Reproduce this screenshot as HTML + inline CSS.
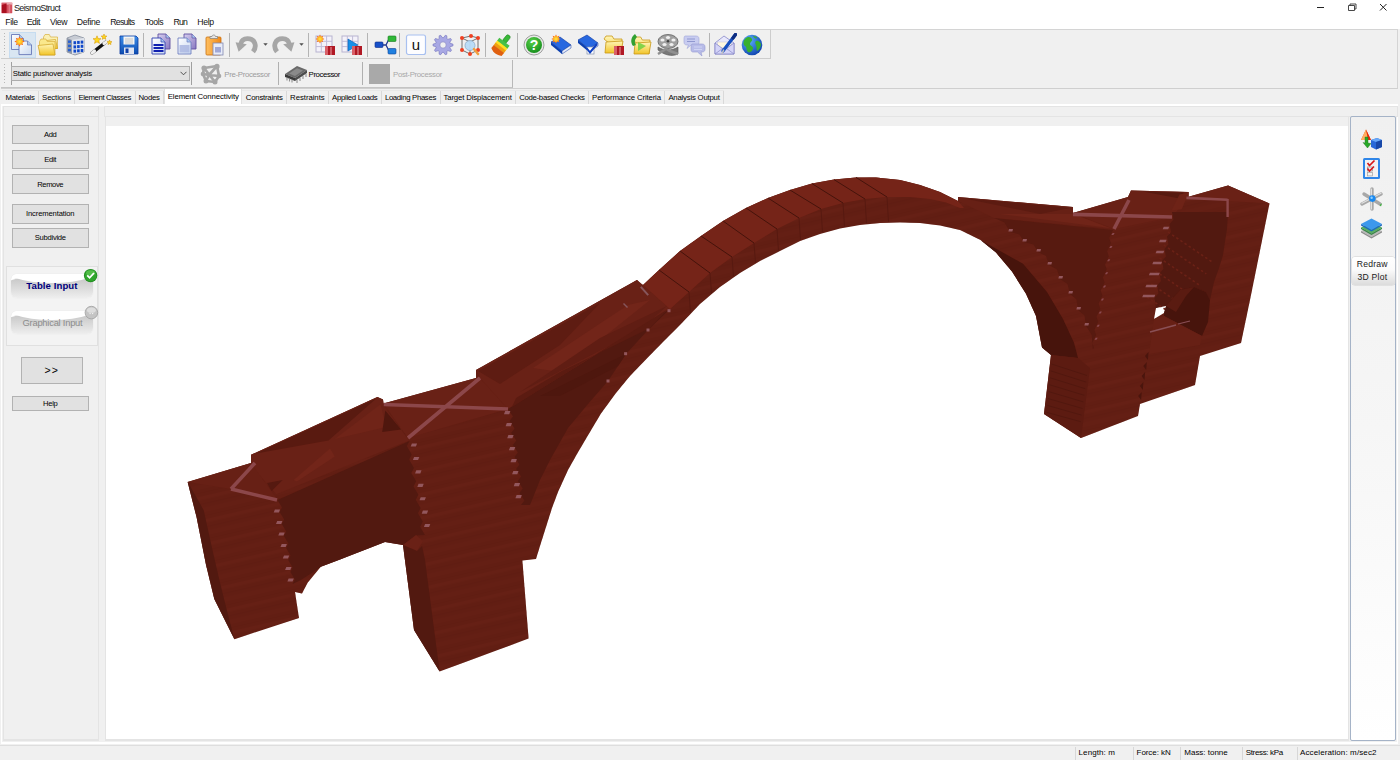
<!DOCTYPE html>
<html>
<head>
<meta charset="utf-8">
<title>SeismoStruct</title>
<style>
*{box-sizing:border-box;margin:0;padding:0}
html,body{width:1400px;height:760px;overflow:hidden;background:#f0f0f0;font-family:"Liberation Sans",sans-serif;font-size:11px;color:#000}
.abs{position:absolute}
#titlebar{left:0;top:0;width:1400px;height:15px;background:#fff}
#menubar{left:0;top:15px;width:1400px;height:14px;background:#fff}
#tb1{left:1px;top:29px;width:770px;height:30px;background:#f0f0f0;border-top:1px solid #d4d4d4;border-bottom:1px solid #cdcdcd;border-right:1px solid #cdcdcd}
#tb2{left:1px;top:60px;width:512px;height:28px;background:#f0f0f0;border-bottom:1px solid #c4c4c4;border-right:1px solid #b8b8b8}
#tb1rest{left:1px;top:29px;width:1397px;height:60px;background:#f0f0f0;border-top:1px solid #d4d4d4;border-bottom:1px solid #cfcfcf;border-right:1px solid #d4d4d4}
#whiteline{left:1px;top:104px;width:1397px;height:2px;background:#fff}
.box{border:1px solid #e4e4e4;background:#f0f0f0}
#canvas{left:106px;top:126px;width:1242px;height:613px;background:#fff}
#status{left:0;top:745px;width:1400px;height:15px;background:#f0f0f0;border-top:1px solid #dedede}
</style>
</head>
<body>
<!-- title bar -->
<div id="titlebar" class="abs"></div>
<svg class="abs" style="left:1px;top:2px" width="12" height="12" viewBox="0 0 12 12"><rect x="0.3" y="0.3" width="11.2" height="11.2" rx="1" fill="#e9a0a8"/><rect x="0.8" y="1.2" width="10.2" height="9.8" fill="#d4505e"/><path d="M0.8 3L5.6 1.4V11H0.8Z" fill="#aa1020"/><path d="M5.6 1.4H11V2.4H5.6Z" fill="#f6dadd"/><rect x="7.6" y="2.4" width="1.6" height="8.6" fill="#e27884"/></svg>
<svg class="abs" style="left:1310px;top:0" width="90" height="15" viewBox="0 0 90 15">
<path d="M7 7.5H14" stroke="#222" stroke-width="1" fill="none"/>
<path d="M38.5 5.5H44.5V10.5H38.5Z M40 5.5V4H46V9H44.5" stroke="#333" stroke-width="0.9" fill="none"/>
<path d="M70 4L76.5 10.5M76.5 4L70 10.5" stroke="#222" stroke-width="1" fill="none"/>
</svg>
<!-- menu bar -->
<div id="menubar" class="abs"></div>
<div class="abs" style="left:13.9px;top:3.1px;font-size:9.00px;line-height:11px;letter-spacing:-0.601px;color:#1a1a1a;white-space:nowrap;">SeismoStruct</div>
<div class="abs" style="left:5.2px;top:17.4px;font-size:8.70px;line-height:10px;letter-spacing:-0.354px;color:#111;white-space:nowrap;">File</div>
<div class="abs" style="left:26.7px;top:17.4px;font-size:8.70px;line-height:10px;letter-spacing:-0.398px;color:#111;white-space:nowrap;">Edit</div>
<div class="abs" style="left:50.1px;top:17.4px;font-size:8.70px;line-height:10px;letter-spacing:-0.425px;color:#111;white-space:nowrap;">View</div>
<div class="abs" style="left:76.8px;top:17.4px;font-size:8.70px;line-height:10px;letter-spacing:-0.291px;color:#111;white-space:nowrap;">Define</div>
<div class="abs" style="left:110.2px;top:17.4px;font-size:8.70px;line-height:10px;letter-spacing:-0.687px;color:#111;white-space:nowrap;">Results</div>
<div class="abs" style="left:144.8px;top:17.4px;font-size:8.70px;line-height:10px;letter-spacing:-0.342px;color:#111;white-space:nowrap;">Tools</div>
<div class="abs" style="left:173.5px;top:17.4px;font-size:8.70px;line-height:10px;letter-spacing:-0.753px;color:#111;white-space:nowrap;">Run</div>
<div class="abs" style="left:197.2px;top:17.4px;font-size:8.70px;line-height:10px;letter-spacing:-0.323px;color:#111;white-space:nowrap;">Help</div>
<!-- toolbars -->
<div id="tb1rest" class="abs"></div>
<div id="tb1" class="abs"></div>
<div id="tb2" class="abs"></div>
<svg width="0" height="0" style="position:absolute"><defs>
<linearGradient id="gFold" x1="0" y1="0" x2="0" y2="1"><stop offset="0" stop-color="#fff6b8"/><stop offset="1" stop-color="#f2c428"/></linearGradient>
<linearGradient id="gDoc" x1="0" y1="0" x2="1" y2="1"><stop offset="0" stop-color="#ffffff"/><stop offset="1" stop-color="#c8d8f0"/></linearGradient>
<linearGradient id="gPur" x1="0" y1="0" x2="1" y2="1"><stop offset="0" stop-color="#d8d0f0"/><stop offset="1" stop-color="#8878c0"/></linearGradient>
<linearGradient id="gBlue" x1="0" y1="0" x2="0" y2="1"><stop offset="0" stop-color="#3c8ce8"/><stop offset="1" stop-color="#0c4cb0"/></linearGradient>
<radialGradient id="gGlobe" cx="0.35" cy="0.3" r="0.8"><stop offset="0" stop-color="#5cb0ff"/><stop offset="1" stop-color="#0a3ca8"/></radialGradient>
<radialGradient id="gGreen" cx="0.4" cy="0.3" r="0.8"><stop offset="0" stop-color="#58d048"/><stop offset="1" stop-color="#108818"/></radialGradient>
<radialGradient id="gSun" cx="0.5" cy="0.5" r="0.5"><stop offset="0" stop-color="#ffe840"/><stop offset="0.55" stop-color="#ffb020"/><stop offset="1" stop-color="#f03010"/></radialGradient>
<linearGradient id="gOr" x1="0" y1="0" x2="1" y2="0"><stop offset="0" stop-color="#ffc060"/><stop offset="1" stop-color="#f08818"/></linearGradient>
<linearGradient id="gGrey" x1="0" y1="0" x2="0" y2="1"><stop offset="0" stop-color="#d8d8d8"/><stop offset="1" stop-color="#707070"/></linearGradient>
</defs></svg>
<div class="abs" style="left:4px;top:33px;width:1px;height:23px;background:repeating-linear-gradient(to bottom,#b8b8b8 0 1px,transparent 1px 3px)"></div>
<div class="abs" style="left:4px;top:64px;width:1px;height:21px;background:repeating-linear-gradient(to bottom,#b8b8b8 0 1px,transparent 1px 3px)"></div>
<div class="abs" style="left:9px;top:32px;width:27px;height:26px;background:#d9e6f2;border:1px solid #c6dcf0"></div>
<svg class="abs" style="left:10.0px;top:32.8px" width="24" height="24" viewBox="0 0 24 24"><path d="M1.5 1.5H9.5L13.5 5.5V16.5H1.5Z" fill="url(#gDoc)" stroke="#6878b8" stroke-width="0.9"/><path d="M9.5 1.5V5.5H13.5" fill="#a8c8f0" stroke="#6878b8" stroke-width="0.7"/><path d="M9 8H17.5L21.5 12V21.6H9Z" fill="url(#gDoc)" stroke="#6878b8" stroke-width="0.9"/><path d="M17.5 8V12H21.5" fill="#a8c8f0" stroke="#6878b8" stroke-width="0.7"/><polygon points="14.5,8.5 12.4,9.7 13.0,12.0 10.7,11.4 9.5,13.5 8.3,11.4 6.0,12.0 6.6,9.7 4.5,8.5 6.6,7.3 6.0,5.0 8.3,5.6 9.5,3.5 10.7,5.6 13.0,5.0 12.4,7.3" fill="url(#gSun)"/></svg>
<svg class="abs" style="left:36.6px;top:32.8px" width="24" height="24" viewBox="0 0 24 24"><path d="M6.5 4L8 1.5L12.3 1.5L13.5 4L20.5 4L20.5 15.5L6.5 15.5Z" fill="#fbf0b4" stroke="#d8b040" stroke-width="0.7"/><path d="M5 8L18.5 6.5L20.5 15.5L7.2 15.5Z" fill="url(#gFold)" stroke="#cfa020" stroke-width="0.7"/><path d="M2.5 8.5L4 6L8.93 6L10.25 8.5L18 8.5L18 22L2.5 22Z" fill="#fae88c" stroke="#d8b040" stroke-width="0.7"/><path d="M1 12.5L16 11L18 22L3.2 22Z" fill="url(#gFold)" stroke="#cfa020" stroke-width="0.7"/></svg>
<svg class="abs" style="left:63.0px;top:32.8px" width="24" height="24" viewBox="0 0 24 24"><path d="M4 5L12 2L21 5V19L12 22L4 19Z" fill="#c8ccd4" stroke="#8890a0" stroke-width="0.8"/><path d="M4 5L9 7V21L4 19Z" fill="#9098a8"/><path d="M9 7L21 5V19L9 21Z" fill="#e0e4ec"/><rect x="10.5" y="8.2" width="2.6" height="3" fill="#1048c8"/><rect x="10.5" y="12.4" width="2.6" height="3" fill="#1048c8"/><rect x="10.5" y="16.6" width="2.6" height="3" fill="#1048c8"/><rect x="14.1" y="7.9" width="2.6" height="3" fill="#1048c8"/><rect x="14.1" y="12.1" width="2.6" height="3" fill="#1048c8"/><rect x="14.1" y="16.3" width="2.6" height="3" fill="#1048c8"/><rect x="17.7" y="7.6" width="2.6" height="3" fill="#1048c8"/><rect x="17.7" y="11.8" width="2.6" height="3" fill="#1048c8"/><rect x="17.7" y="16" width="2.6" height="3" fill="#1048c8"/><rect x="5" y="7.5" width="3" height="2.4" fill="#2860d0"/><rect x="5" y="11.7" width="3" height="2.4" fill="#2860d0"/><rect x="5" y="15.9" width="3" height="2.4" fill="#2860d0"/></svg>
<svg class="abs" style="left:89.4px;top:32.8px" width="24" height="24" viewBox="0 0 24 24"><path d="M3 20L17 9" stroke="#101010" stroke-width="3.4" stroke-linecap="round"/><path d="M3 20L5.5 18" stroke="#f0f0f0" stroke-width="3.2" stroke-linecap="round"/><path d="M15 10.5L17.5 8.7" stroke="#f0f0f0" stroke-width="3.2" stroke-linecap="round"/><polygon points="8.0,2.8 9.1,5.5 12.0,5.7 9.8,7.6 10.5,10.4 8.0,8.9 5.5,10.4 6.2,7.6 4.0,5.7 6.9,5.5" fill="#ffd820" stroke="#d09000" stroke-width="0.5"/><polygon points="15.0,1.0 15.8,2.9 17.9,3.1 16.3,4.4 16.8,6.4 15.0,5.3 13.2,6.4 13.7,4.4 12.1,3.1 14.2,2.9" fill="#ffd820" stroke="#d09000" stroke-width="0.5"/><polygon points="20.5,6.9 21.2,8.6 23.0,8.7 21.6,9.9 22.0,11.6 20.5,10.7 19.0,11.6 19.4,9.9 18.0,8.7 19.8,8.6" fill="#ffd820" stroke="#d09000" stroke-width="0.5"/></svg>
<svg class="abs" style="left:116.6px;top:32.8px" width="24" height="24" viewBox="0 0 24 24"><path d="M3 3H19L21 5V21H3Z" fill="url(#gBlue)" stroke="#0838a0" stroke-width="0.8"/><rect x="6.5" y="3.5" width="11" height="8" fill="#f4f4f4"/><path d="M8 6H16M8 8H16M8 10H16" stroke="#b0b0b0" stroke-width="0.7"/><rect x="7" y="14.5" width="10" height="6.5" fill="#e0e4f0"/><rect x="8.5" y="15.5" width="3" height="4.5" fill="#1040a8"/></svg>
<div class="abs" style="left:142.8px;top:33px;width:1px;height:24px;background:#b4b4b4"></div>
<svg class="abs" style="left:148.7px;top:32.8px" width="24" height="24" viewBox="0 0 24 24"><path d="M9 1H17L21 5V16H9Z" fill="url(#gPur)" stroke="#6050a0" stroke-width="0.9"/><path d="M17 1V5H21" fill="#a8c8f0" stroke="#6050a0" stroke-width="0.7"/><path d="M3 5H12L16 9V21H3Z" fill="url(#gDoc)" stroke="#3040b0" stroke-width="0.9"/><path d="M12 5V9H16" fill="#a8c8f0" stroke="#3040b0" stroke-width="0.7"/><path d="M4.5 12H14.5M4.5 15H14.5M4.5 18H14.5" stroke="#1020b0" stroke-width="1.8"/></svg>
<svg class="abs" style="left:174.8px;top:32.8px" width="24" height="24" viewBox="0 0 24 24"><path d="M9 1H17L21 5V16H9Z" fill="url(#gPur)" stroke="#6050a0" stroke-width="0.9"/><path d="M17 1V5H21" fill="#a8c8f0" stroke="#6050a0" stroke-width="0.7"/><path d="M3 5H12L16 9V21H3Z" fill="url(#gDoc)" stroke="#7080c0" stroke-width="0.9"/><path d="M12 5V9H16" fill="#a8c8f0" stroke="#7080c0" stroke-width="0.7"/><rect x="4.5" y="12" width="10" height="7.5" fill="#a8b4e0" opacity="0.8"/></svg>
<svg class="abs" style="left:203.0px;top:32.8px" width="24" height="24" viewBox="0 0 24 24"><rect x="3" y="4" width="15" height="18" rx="1" fill="url(#gOr)" stroke="#c87010" stroke-width="0.8"/><path d="M7 5V3.5H9C9 1.5 12.5 1.5 12.5 3.5H14.5V5.5H7Z" fill="#e4e4e4" stroke="#808080" stroke-width="0.7"/><rect x="10" y="10" width="10" height="12" fill="#e8ecf8" stroke="#8088b0" stroke-width="0.8"/><rect x="12" y="14" width="6" height="5.5" fill="#a0a8d8"/></svg>
<div class="abs" style="left:229.1px;top:33px;width:1px;height:24px;background:#b4b4b4"></div>
<svg class="abs" style="left:234.4px;top:32.8px" width="24" height="24" viewBox="0 0 24 24"><path d="M19 18.8C23.5 13 21 5.6 13.5 5.6C9.5 5.6 7.2 8 6.6 11.2" stroke="#a6a6a6" stroke-width="4.8" fill="none"/><path d="M1.6 9.2L12.8 11.2L4.6 18.8Z" fill="#a6a6a6"/></svg>
<svg class="abs" style="left:262.5px;top:43px" width="6" height="4" viewBox="0 0 6 4"><path d="M0.3 0.3H4.7L2.5 2.8Z" fill="#505050"/></svg>
<svg class="abs" style="left:271.6px;top:32.8px" width="24" height="24" viewBox="0 0 24 24"><g transform="translate(24,0) scale(-1,1)"><path d="M19 18.8C23.5 13 21 5.6 13.5 5.6C9.5 5.6 7.2 8 6.6 11.2" stroke="#a6a6a6" stroke-width="4.8" fill="none"/><path d="M1.6 9.2L12.8 11.2L4.6 18.8Z" fill="#a6a6a6"/></g></svg>
<svg class="abs" style="left:299.4px;top:43px" width="6" height="4" viewBox="0 0 6 4"><path d="M0.3 0.3H4.7L2.5 2.8Z" fill="#505050"/></svg>
<div class="abs" style="left:307.8px;top:33px;width:1px;height:24px;background:#b4b4b4"></div>
<svg class="abs" style="left:313.7px;top:32.8px" width="24" height="24" viewBox="0 0 24 24"><rect x="2" y="3" width="16" height="16" fill="#f4f2fa" stroke="#b8b4d0" stroke-width="1"/><path d="M7.3 3V19M2 8.3H18" stroke="#c0bcd8" stroke-width="1"/><path d="M12.6 3V19M2 13.6H18" stroke="#c0bcd8" stroke-width="1"/><polygon points="10.4,6.0 8.5,7.0 9.1,9.1 7.0,8.5 6.0,10.4 5.0,8.5 2.9,9.1 3.5,7.0 1.6,6.0 3.5,5.0 2.9,2.9 5.0,3.5 6.0,1.6 7.0,3.5 9.1,2.9 8.5,5.0" fill="url(#gSun)"/><rect x="11" y="13" width="10" height="9" fill="#b01824"/><rect x="11" y="13" width="3" height="9" fill="#d86068"/><rect x="16.5" y="14" width="1" height="8" fill="#e8a0a4"/></svg>
<svg class="abs" style="left:340.1px;top:32.8px" width="24" height="24" viewBox="0 0 24 24"><rect x="2" y="3" width="16" height="16" fill="#f4f2fa" stroke="#b8b4d0" stroke-width="1"/><path d="M7.3 3V19M2 8.3H18" stroke="#c0bcd8" stroke-width="1"/><path d="M12.6 3V19M2 13.6H18" stroke="#c0bcd8" stroke-width="1"/><path d="M8 6L18 12L8 18Z" fill="#1890e8" stroke="#0858b0" stroke-width="0.6"/><rect x="12" y="13" width="10" height="9" fill="#b01824"/><rect x="12" y="13" width="3" height="9" fill="#d86068"/><rect x="17.5" y="14" width="1" height="8" fill="#e8a0a4"/></svg>
<div class="abs" style="left:367.1px;top:33px;width:1px;height:24px;background:#b4b4b4"></div>
<svg class="abs" style="left:373.5px;top:32.8px" width="24" height="24" viewBox="0 0 24 24"><path d="M9 12H12M12 12L15 6M12 12L15 18" stroke="#203890" stroke-width="1.3" fill="none"/><rect x="1" y="9" width="8" height="5.5" rx="1" fill="#1850c8" stroke="#0c2c88" stroke-width="0.6"/><rect x="14" y="3" width="8" height="5.5" rx="1" fill="#30b838" stroke="#187820" stroke-width="0.6"/><rect x="14" y="15.5" width="8" height="5.5" rx="1" fill="#2080e0" stroke="#0c4098" stroke-width="0.6"/></svg>
<div class="abs" style="left:399.1px;top:33px;width:1px;height:24px;background:#b4b4b4"></div>
<svg class="abs" style="left:404.4px;top:32.8px" width="24" height="24" viewBox="0 0 24 24"><rect x="2.5" y="2" width="19" height="19.5" rx="2" fill="#fdfdff" stroke="#a8c0f0" stroke-width="1.2"/><text x="12" y="17" font-family="Liberation Sans,sans-serif" font-size="15" text-anchor="middle" fill="#101010">u</text></svg>
<svg class="abs" style="left:430.9px;top:32.8px" width="24" height="24" viewBox="0 0 24 24"><polygon points="22.0,11.2 22.0,12.8 19.2,13.7 18.8,14.8 20.5,17.2 19.6,18.5 16.8,17.6 15.9,18.3 15.8,21.2 14.3,21.7 12.6,19.4 11.4,19.4 9.7,21.7 8.2,21.2 8.1,18.3 7.2,17.6 4.4,18.5 3.5,17.2 5.2,14.8 4.8,13.7 2.0,12.8 2.0,11.2 4.8,10.3 5.2,9.2 3.5,6.8 4.4,5.5 7.2,6.4 8.1,5.7 8.2,2.8 9.7,2.3 11.4,4.6 12.6,4.6 14.3,2.3 15.8,2.8 15.9,5.7 16.8,6.4 19.6,5.5 20.5,6.8 18.8,9.2 19.2,10.3" fill="#a8a8e4" stroke="#7878c0" stroke-width="0.7"/><circle cx="12" cy="12" r="3.2" fill="#f0f0f0" stroke="#7878c0" stroke-width="0.6"/></svg>
<svg class="abs" style="left:458.0px;top:32.8px" width="24" height="24" viewBox="0 0 24 24"><path d="M4 5L13 3L20 5V17L12 21L4 17ZM4 5L12 9L20 5M12 9V21" stroke="#707070" stroke-width="1" fill="none"/><circle cx="12" cy="12.5" r="5" fill="#b8dcf8" stroke="#88a8c8" stroke-width="0.8" opacity="0.95"/><circle cx="4" cy="5" r="2" fill="#f04020"/><circle cx="13" cy="3" r="2" fill="#f04020"/><circle cx="20" cy="5" r="2" fill="#f04020"/><circle cx="4" cy="17" r="2" fill="#f04020"/><circle cx="12" cy="21" r="2" fill="#f04020"/><circle cx="20" cy="17" r="2" fill="#f04020"/><path d="M16 16L20 21" stroke="#f0a040" stroke-width="2.4" stroke-linecap="round"/></svg>
<div class="abs" style="left:484.5px;top:33px;width:1px;height:24px;background:#b4b4b4"></div>
<svg class="abs" style="left:490.0px;top:32.8px" width="24" height="24" viewBox="0 0 24 24"><g transform="rotate(38 12 12)"><rect x="9.5" y="0" width="4.6" height="9" rx="2.2" fill="#38b838" stroke="#208020" stroke-width="0.5"/><rect x="5.5" y="8" width="13" height="4" fill="#48c048"/><rect x="5.5" y="11.5" width="13" height="3" fill="#ffe020"/><rect x="5.5" y="14" width="13" height="3.4" fill="#f0a010"/><path d="M5.5 17H18.5V21C14 23.5 10 23.5 5.5 21Z" fill="#e06010"/></g></svg>
<div class="abs" style="left:516.9px;top:33px;width:1px;height:24px;background:#b4b4b4"></div>
<svg class="abs" style="left:521.6px;top:32.8px" width="24" height="24" viewBox="0 0 24 24"><circle cx="12" cy="12" r="10" fill="#e8e8e8" stroke="#a0a0a0" stroke-width="1"/><circle cx="12" cy="12" r="8" fill="url(#gGreen)"/><text x="12" y="17.2" font-family="Liberation Sans,sans-serif" font-size="14" font-weight="bold" text-anchor="middle" fill="#fff">?</text></svg>
<svg class="abs" style="left:548.7px;top:32.8px" width="24" height="24" viewBox="0 0 24 24"><path d="M2 9L11 4L22 12L13 18Z" fill="#2868e0" stroke="#0c38a0" stroke-width="0.6"/><path d="M2 9V12L13 21V18Z" fill="#0c40b0"/><path d="M13 18L22 12V15L13 21Z" fill="#e8ecf8" stroke="#0c38a0" stroke-width="0.5"/><polygon points="11.6,6.0 9.6,7.1 10.3,9.3 8.1,8.6 7.0,10.6 5.9,8.6 3.7,9.3 4.4,7.1 2.4,6.0 4.4,4.9 3.7,2.7 5.9,3.4 7.0,1.4 8.1,3.4 10.3,2.7 9.6,4.9" fill="url(#gSun)"/></svg>
<svg class="abs" style="left:576.0px;top:32.8px" width="24" height="24" viewBox="0 0 24 24"><g transform="translate(0,-2)"><path d="M2 9L11 4L22 12L13 18Z" fill="#2868e0" stroke="#0c38a0" stroke-width="0.6"/><path d="M2 9V12L13 21V18Z" fill="#0c40b0"/><path d="M13 18L22 12V15L13 21Z" fill="#e8ecf8" stroke="#0c38a0" stroke-width="0.5"/></g><rect x="11" y="14" width="7" height="7" fill="#fff" stroke="#8090b0" stroke-width="0.7"/><path d="M10.5 15L14 19.5L21 11" stroke="#1040c0" stroke-width="2" fill="none"/></svg>
<svg class="abs" style="left:603.0px;top:32.8px" width="24" height="24" viewBox="0 0 24 24"><path d="M1 6L3 3L9.1 3L10.9 6L19 6L18 20Z" fill="url(#gFold)" stroke="#c89818" stroke-width="0.8"/><path d="M3 9L20 8L18 20L2 20Z" fill="url(#gFold)" stroke="#c89818" stroke-width="0.8"/><rect x="11" y="13" width="10" height="9" fill="#b01824"/><rect x="11" y="13" width="3" height="9" fill="#d86068"/><rect x="16.5" y="14" width="1" height="8" fill="#e8a0a4"/></svg>
<svg class="abs" style="left:629.4px;top:32.8px" width="24" height="24" viewBox="0 0 24 24"><path d="M4 7L6 4L11.65 4L13.35 7L21 7L20 21Z" fill="url(#gFold)" stroke="#c89818" stroke-width="0.8"/><path d="M6 10L22 9L20 21L5 21Z" fill="url(#gFold)" stroke="#c89818" stroke-width="0.8"/><path d="M6 1C2 4 1 9 4 13L7 12C5 9 6 6 8 4Z" fill="#30a030"/><path d="M9 9L17 13L9 18Z" fill="#70d040" opacity="0.85"/></svg>
<svg class="abs" style="left:655.9px;top:32.8px" width="24" height="24" viewBox="0 0 24 24"><ellipse cx="12" cy="8.5" rx="10" ry="7" fill="#a0a0a0" stroke="#606060" stroke-width="0.8"/><ellipse cx="12" cy="4.5" rx="2.1" ry="1.5" fill="#f0f0f0"/><ellipse cx="6.5" cy="7" rx="2.1" ry="1.5" fill="#f0f0f0"/><ellipse cx="17.5" cy="7" rx="2.1" ry="1.5" fill="#f0f0f0"/><ellipse cx="8.5" cy="11.5" rx="2.1" ry="1.5" fill="#f0f0f0"/><ellipse cx="15.5" cy="11.5" rx="2.1" ry="1.5" fill="#f0f0f0"/><circle cx="12" cy="8.2" r="1.3" fill="#404040"/><path d="M2 14C8 18 16 18 22 14V21C16 24 8 22 2 17Z" fill="#787878" stroke="#505050" stroke-width="0.6"/><path d="M2 21L10 16L14 18L22 21" stroke="#909090" stroke-width="2.5" fill="none"/></svg>
<svg class="abs" style="left:681.6px;top:32.8px" width="24" height="24" viewBox="0 0 24 24"><path d="M3 3H14C16 3 17 4 17 6V9C17 11 16 12 14 12H9L5 15.5L6.5 12H5C3 12 2 11 2 9V6C2 4 2.5 3 3 3Z" fill="#c8ccf0" stroke="#a0a4d8" stroke-width="0.6"/><path d="M5 6H13M5 8.5H13" stroke="#9098d0" stroke-width="1.2"/><path d="M11 11H20C22 11 23 12 23 14V16C23 18 22 19 20 19H19L20 23L15.5 19H11C9.5 19 9 18 9 16V14C9 12 9.5 11 11 11Z" fill="#b8bce8" stroke="#9498d0" stroke-width="0.6"/><path d="M12 14H20M12 16.5H20" stroke="#d0d4f4" stroke-width="1.1"/></svg>
<div class="abs" style="left:708.8px;top:33px;width:1px;height:24px;background:#b4b4b4"></div>
<svg class="abs" style="left:713.0px;top:32.8px" width="24" height="24" viewBox="0 0 24 24"><path d="M2 10L11 3L21 10V21H2Z" fill="#e8e8fc" stroke="#8888c8" stroke-width="0.8"/><path d="M4.5 9H18.5V15H4.5Z" fill="#fff8e0" stroke="#c0c0d8" stroke-width="0.5"/><path d="M2 10L11.5 17L21 10V21H2Z" fill="#d4d4f8" stroke="#8888c8" stroke-width="0.8"/><path d="M2 21L9.5 15.5M21 21L13.5 15.5" stroke="#8888c8" stroke-width="0.7"/><path d="M22.5 1.5L10 18" stroke="#1850c0" stroke-width="3.2" stroke-linecap="round"/><path d="M10.6 17.2L9 20.5" stroke="#c0c0c0" stroke-width="1.6" stroke-linecap="round"/><path d="M22.5 1.5L20 5" stroke="#0c2c80" stroke-width="3.2" stroke-linecap="round"/></svg>
<svg class="abs" style="left:740.0px;top:32.8px" width="24" height="24" viewBox="0 0 24 24"><circle cx="12" cy="12" r="10.3" fill="url(#gGlobe)"/><path d="M5 6C8 3 11 4 12 6C13 8 10 9 10 11C10 13 13 13 13 15C13 18 10 20 8 19C6 17 7 14 5 13C3 12 3 8 5 6Z" fill="#38b030"/><path d="M16 8C18 7 20 9 21 11C21 14 19 17 17 18C16 16 17 14 16 12C15 10 15 9 16 8Z" fill="#38b030"/><path d="M13 3C15 3 17 4 17 5C16 6 14 5 13 3Z" fill="#38b030"/></svg>
<div class="abs" style="left:11px;top:62px;width:1px;height:23px;background:#a0a0a0"></div>
<div class="abs" style="left:191px;top:62px;width:1px;height:23px;background:#a0a0a0"></div>
<div class="abs" style="left:10.5px;top:66px;width:179px;height:14.5px;background:#e1e1e1;border:1px solid #adadad"></div>
<div class="abs" style="left:12.7px;top:68.6px;font-size:7.80px;line-height:9px;letter-spacing:-0.200px;color:#000;white-space:nowrap;">Static pushover analysis</div>
<svg class="abs" style="left:180px;top:71px" width="7" height="5" viewBox="0 0 7 5"><path d="M0.5 0.8L3.5 3.8L6.5 0.8" stroke="#404040" stroke-width="0.9" fill="none"/></svg>
<svg class="abs" style="left:200px;top:63px" width="22" height="22" viewBox="0 0 22 22"><g stroke="#a6a6a6" stroke-width="2.7" fill="none" stroke-linejoin="round"><path d="M4 5L17 3L19 13L15 19L6 18L3 11Z"/><path d="M4 5L15 19M17 3L9 12L6 18M3 11L9 12L19 13"/></g><g fill="#a6a6a6"><circle cx="4" cy="5" r="2.6"/><circle cx="17" cy="3.4" r="2.6"/><circle cx="19" cy="13" r="2.3"/><circle cx="15" cy="19" r="2.5"/><circle cx="6" cy="18" r="2.5"/><circle cx="3" cy="11" r="2.3"/></g></svg>
<div class="abs" style="left:224.3px;top:69.6px;font-size:7.80px;line-height:9px;letter-spacing:-0.319px;color:#9c9c9c;white-space:nowrap;">Pre-Processor</div>
<div class="abs" style="left:278px;top:62px;width:1px;height:23px;background:#b0b0b0"></div>
<svg class="abs" style="left:284px;top:64px" width="24" height="20" viewBox="0 0 24 20"><path d="M1 10L13 2L23 6L11 14Z" fill="#6a6a6a"/><path d="M1 10L11 14V17L1 13Z" fill="#3a3a3a"/><path d="M11 14L23 6V9L11 17Z" fill="#4c4c4c"/><g stroke="#909090" stroke-width="1.1"><path d="M3 13.5V16.5M5.5 14.5V17.5M8 15.5V18.5M13 16V19M16 14V17M19 12V15M22 10V13"/></g><path d="M5 9.5L13 4.2L19 6.6L11 12Z" fill="#8a8a8a"/></svg>
<div class="abs" style="left:308.6px;top:69.6px;font-size:7.80px;line-height:9px;letter-spacing:-0.412px;color:#000;white-space:nowrap;">Processor</div>
<div class="abs" style="left:362px;top:62px;width:1px;height:23px;background:#b0b0b0"></div>
<div class="abs" style="left:369.4px;top:64.3px;width:20.6px;height:20px;background:#a9a9a9"></div>
<div class="abs" style="left:393.0px;top:69.6px;font-size:7.80px;line-height:9px;letter-spacing:-0.308px;color:#a8a8a8;white-space:nowrap;">Post-Processor</div>
<!-- tabs -->
<div class="abs" style="left:2px;top:90px;width:722px;height:14px;background:#f0f0f0;border-top:1px solid #e8e8e8"></div>
<div class="abs" style="left:38.1px;top:91px;width:1px;height:13px;background:#d9d9d9"></div>
<div class="abs" style="left:5.5px;top:92.6px;font-size:7.80px;line-height:9px;letter-spacing:-0.282px;color:#000;white-space:nowrap;">Materials</div>
<div class="abs" style="left:74.4px;top:91px;width:1px;height:13px;background:#d9d9d9"></div>
<div class="abs" style="left:42.1px;top:92.6px;font-size:7.80px;line-height:9px;letter-spacing:-0.139px;color:#000;white-space:nowrap;">Sections</div>
<div class="abs" style="left:134.5px;top:91px;width:1px;height:13px;background:#d9d9d9"></div>
<div class="abs" style="left:78.4px;top:92.6px;font-size:7.80px;line-height:9px;letter-spacing:-0.395px;color:#000;white-space:nowrap;">Element Classes</div>
<div class="abs" style="left:163.2px;top:91px;width:1px;height:13px;background:#d9d9d9"></div>
<div class="abs" style="left:138.5px;top:92.6px;font-size:7.80px;line-height:9px;letter-spacing:-0.269px;color:#000;white-space:nowrap;">Nodes</div>
<div class="abs" style="left:163.7px;top:89px;width:78.6px;height:16px;background:#fff;border-left:1px solid #e0e0e0;border-right:1px solid #e0e0e0"></div>
<div class="abs" style="left:167.7px;top:91.6px;font-size:7.80px;line-height:9px;letter-spacing:-0.108px;color:#000;white-space:nowrap;">Element Connectivity</div>
<div class="abs" style="left:286.1px;top:91px;width:1px;height:13px;background:#d9d9d9"></div>
<div class="abs" style="left:245.8px;top:92.6px;font-size:7.80px;line-height:9px;letter-spacing:-0.241px;color:#000;white-space:nowrap;">Constraints</div>
<div class="abs" style="left:328.1px;top:91px;width:1px;height:13px;background:#d9d9d9"></div>
<div class="abs" style="left:290.1px;top:92.6px;font-size:7.80px;line-height:9px;letter-spacing:-0.061px;color:#000;white-space:nowrap;">Restraints</div>
<div class="abs" style="left:380.9px;top:91px;width:1px;height:13px;background:#d9d9d9"></div>
<div class="abs" style="left:332.1px;top:92.6px;font-size:7.80px;line-height:9px;letter-spacing:-0.318px;color:#000;white-space:nowrap;">Applied Loads</div>
<div class="abs" style="left:439.5px;top:91px;width:1px;height:13px;background:#d9d9d9"></div>
<div class="abs" style="left:384.9px;top:92.6px;font-size:7.80px;line-height:9px;letter-spacing:-0.346px;color:#000;white-space:nowrap;">Loading Phases</div>
<div class="abs" style="left:515.2px;top:91px;width:1px;height:13px;background:#d9d9d9"></div>
<div class="abs" style="left:443.5px;top:92.6px;font-size:7.80px;line-height:9px;letter-spacing:-0.152px;color:#000;white-space:nowrap;">Target Displacement</div>
<div class="abs" style="left:588.1px;top:91px;width:1px;height:13px;background:#d9d9d9"></div>
<div class="abs" style="left:519.2px;top:92.6px;font-size:7.80px;line-height:9px;letter-spacing:-0.310px;color:#000;white-space:nowrap;">Code-based Checks</div>
<div class="abs" style="left:664.4px;top:91px;width:1px;height:13px;background:#d9d9d9"></div>
<div class="abs" style="left:592.1px;top:92.6px;font-size:7.80px;line-height:9px;letter-spacing:-0.158px;color:#000;white-space:nowrap;">Performance Criteria</div>
<div class="abs" style="left:723.2px;top:91px;width:1px;height:13px;background:#d9d9d9"></div>
<div class="abs" style="left:668.4px;top:92.6px;font-size:7.80px;line-height:9px;letter-spacing:-0.222px;color:#000;white-space:nowrap;">Analysis Output</div>
<div id="whiteline" class="abs"></div>
<div class="abs" style="left:1px;top:104px;width:1px;height:640px;background:#fff"></div>
<div class="abs" style="left:1397px;top:104px;width:1px;height:640px;background:#fff"></div>
<!-- left panel -->
<div class="abs box" style="left:3px;top:106px;width:96px;height:11px"></div>
<div class="abs box" style="left:3px;top:116px;width:96px;height:625px;border-bottom:2px solid #e4e4e4"></div>
<div class="abs" style="left:11.5px;top:125.0px;width:77.5px;height:19.0px;background:#e1e1e1;border:1px solid #b2b2b2"></div><div class="abs" style="left:44.0px;top:130.0px;font-size:7.60px;line-height:9px;letter-spacing:-0.341px;color:#000;white-space:nowrap;">Add</div>
<div class="abs" style="left:11.5px;top:149.5px;width:77.5px;height:19.2px;background:#e1e1e1;border:1px solid #b2b2b2"></div><div class="abs" style="left:44.2px;top:154.6px;font-size:7.60px;line-height:9px;letter-spacing:-0.274px;color:#000;white-space:nowrap;">Edit</div>
<div class="abs" style="left:11.5px;top:174.4px;width:77.5px;height:19.4px;background:#e1e1e1;border:1px solid #b2b2b2"></div><div class="abs" style="left:37.2px;top:179.6px;font-size:7.60px;line-height:9px;letter-spacing:-0.383px;color:#000;white-space:nowrap;">Remove</div>
<div class="abs" style="left:11.5px;top:204.0px;width:77.5px;height:19.6px;background:#e1e1e1;border:1px solid #b2b2b2"></div><div class="abs" style="left:26.0px;top:209.3px;font-size:7.60px;line-height:9px;letter-spacing:-0.126px;color:#000;white-space:nowrap;">Incrementation</div>
<div class="abs" style="left:11.5px;top:228.0px;width:77.5px;height:19.5px;background:#e1e1e1;border:1px solid #b2b2b2"></div><div class="abs" style="left:34.8px;top:233.2px;font-size:7.60px;line-height:9px;letter-spacing:-0.264px;color:#000;white-space:nowrap;">Subdivide</div>
<div class="abs" style="left:6px;top:266px;width:92px;height:80px;background:#f3f3f3;border:1px solid #e0e0e0"></div>
<div class="abs" style="left:10.5px;top:273.7px;width:82.5px;height:24.2px;border-radius:6px;background:#fff;overflow:hidden;box-shadow:0 0 1px #d8d8d8"><div style="position:absolute;left:-12px;top:2.0px;width:106px;height:28.2px;border-radius:50%/60%;background:linear-gradient(to bottom,#c4c4c4 0%,#dcdcdc 45%,#fafafa 100%)"></div><div style="position:absolute;left:-12px;top:-9px;width:106px;height:18.0px;border-radius:0 0 50% 50%/0 0 100% 100%;background:#fff"></div></div>
<div class="abs" style="left:26.3px;top:280.2px;font-size:9.60px;line-height:11px;letter-spacing:0.075px;color:#00007c;white-space:nowrap;font-weight:bold;">Table Input</div>
<div class="abs" style="left:10.5px;top:310.6px;width:82.5px;height:23.6px;border-radius:6px;background:#fff;overflow:hidden;box-shadow:0 0 1px #d8d8d8"><div style="position:absolute;left:-12px;top:2.0px;width:106px;height:27.6px;border-radius:50%/60%;background:linear-gradient(to bottom,#c4c4c4 0%,#dcdcdc 45%,#fafafa 100%)"></div><div style="position:absolute;left:-12px;top:-9px;width:106px;height:18.0px;border-radius:0 0 50% 50%/0 0 100% 100%;background:#fff"></div></div>
<div class="abs" style="left:22.5px;top:317.3px;font-size:9.40px;line-height:11px;letter-spacing:-0.243px;color:#8c8c8c;white-space:nowrap;">Graphical Input</div>
<svg class="abs" style="left:83px;top:268px" width="15" height="15" viewBox="0 0 15 15"><circle cx="7.6" cy="7.6" r="6.7" fill="#1f8a1f"/><circle cx="7.6" cy="7.6" r="6" fill="#2fa52c"/><ellipse cx="7.6" cy="5" rx="4.6" ry="2.8" fill="#6fd060" opacity="0.55"/><path d="M4.2 7.4L6.6 9.8L11 5" stroke="#fff" stroke-width="1.8" fill="none"/></svg>
<svg class="abs" style="left:84px;top:305px" width="15" height="15" viewBox="0 0 15 15"><circle cx="7.4" cy="7.6" r="6.3" fill="#c4c4c4" stroke="#a0a0a0" stroke-width="0.8"/><ellipse cx="7.4" cy="5.2" rx="4.4" ry="2.6" fill="#e4e4e4" opacity="0.8"/><path d="M5.5 8.6H6.7M8 8.6H9.2" stroke="#f4f4f4" stroke-width="1"/></svg>
<div class="abs" style="left:21.0px;top:356.5px;width:61.6px;height:27.0px;background:#e1e1e1;border:1px solid #b2b2b2"></div><div class="abs" style="left:44.5px;top:364.1px;font-size:10.50px;line-height:12px;letter-spacing:1.117px;color:#000;white-space:nowrap;">&gt;&gt;</div>
<div class="abs" style="left:11.5px;top:396.3px;width:77.5px;height:15.0px;background:#e1e1e1;border:1px solid #b2b2b2"></div><div class="abs" style="left:43.0px;top:399.3px;font-size:7.60px;line-height:9px;letter-spacing:-0.282px;color:#000;white-space:nowrap;">Help</div>
<!-- center -->
<div class="abs box" style="left:104px;top:106px;width:1294px;height:11px"></div>
<div class="abs box" style="left:105px;top:116px;width:1244px;height:625px;border-bottom:2px solid #e4e4e4"></div>
<div id="canvas" class="abs">

</div>
<svg class="abs" style="left:0;top:0" width="1400" height="760" viewBox="0 0 1400 760"><polygon points="187.6,482.0 251.0,463.0 251.0,454.8 377.4,397.0 383.0,399.5 383.5,403.6 476.0,378.0 476.0,370.0 637.0,280.0 641.0,284.0 643.0,285.0 659.0,270.0 680.0,251.0 701.0,236.0 723.0,221.0 746.0,208.0 768.0,198.0 790.0,190.0 812.0,183.6 834.0,179.6 856.0,177.4 876.0,177.4 900.0,180.0 920.0,185.0 940.0,192.0 958.0,201.0 958.0,197.0 1073.0,207.0 1073.0,213.0 1128.0,197.0 1131.0,190.4 1188.6,192.0 1188.6,196.7 1228.1,185.6 1269.5,203.6 1250.0,300.0 1241.0,343.0 1200.0,356.0 1195.0,385.0 1140.0,404.0 1138.0,416.0 1081.0,438.0 1044.0,414.0 1051.0,355.0 1042.0,347.4 1036.0,316.0 1026.0,293.7 1012.0,271.6 996.0,252.6 980.5,240.0 960.0,230.0 940.0,225.6 920.0,223.0 900.0,222.4 880.0,223.0 860.0,225.0 840.0,228.6 820.0,234.0 800.0,241.0 780.0,251.0 760.0,261.0 740.0,273.0 720.0,287.0 700.0,304.0 680.0,325.0 661.0,344.0 645.4,360.0 630.0,376.0 616.0,393.0 601.0,413.5 587.0,437.0 577.0,454.0 568.0,470.0 558.0,492.0 552.0,508.0 540.0,546.0 536.0,559.0 522.4,560.4 528.6,638.6 439.6,671.4 414.0,630.0 403.0,545.0 385.0,542.0 340.0,559.5 320.8,566.7 307.8,582.6 302.0,593.5 295.0,592.0 299.0,618.0 234.4,639.2 214.3,599.0 206.0,564.7 196.6,517.3" fill="#621e13" />
<defs><pattern id="tex" width="60" height="23" patternUnits="userSpaceOnUse" patternTransform="rotate(-13)"><rect x="0" y="0" width="60" height="3.4" fill="#6b2317" opacity="0.38"/><rect x="0" y="7" width="60" height="1.6" fill="#5c1b11" opacity="0.35"/><rect x="0" y="11.5" width="60" height="4.2" fill="#692216" opacity="0.3"/><rect x="0" y="19" width="60" height="1.4" fill="#5c1b11" opacity="0.3"/></pattern><clipPath id="silclip"><polygon points="187.6,482.0 251.0,463.0 251.0,454.8 377.4,397.0 383.0,399.5 383.5,403.6 476.0,378.0 476.0,370.0 637.0,280.0 641.0,284.0 643.0,285.0 659.0,270.0 680.0,251.0 701.0,236.0 723.0,221.0 746.0,208.0 768.0,198.0 790.0,190.0 812.0,183.6 834.0,179.6 856.0,177.4 876.0,177.4 900.0,180.0 920.0,185.0 940.0,192.0 958.0,201.0 958.0,197.0 1073.0,207.0 1073.0,213.0 1128.0,197.0 1131.0,190.4 1188.6,192.0 1188.6,196.7 1228.1,185.6 1269.5,203.6 1250.0,300.0 1241.0,343.0 1200.0,356.0 1195.0,385.0 1140.0,404.0 1138.0,416.0 1081.0,438.0 1044.0,414.0 1051.0,355.0 1042.0,347.4 1036.0,316.0 1026.0,293.7 1012.0,271.6 996.0,252.6 980.5,240.0 960.0,230.0 940.0,225.6 920.0,223.0 900.0,222.4 880.0,223.0 860.0,225.0 840.0,228.6 820.0,234.0 800.0,241.0 780.0,251.0 760.0,261.0 740.0,273.0 720.0,287.0 700.0,304.0 680.0,325.0 661.0,344.0 645.4,360.0 630.0,376.0 616.0,393.0 601.0,413.5 587.0,437.0 577.0,454.0 568.0,470.0 558.0,492.0 552.0,508.0 540.0,546.0 536.0,559.0 522.4,560.4 528.6,638.6 439.6,671.4 414.0,630.0 403.0,545.0 385.0,542.0 340.0,559.5 320.8,566.7 307.8,582.6 302.0,593.5 295.0,592.0 299.0,618.0 234.4,639.2 214.3,599.0 206.0,564.7 196.6,517.3"/></clipPath></defs>
<rect x="180" y="170" width="1100" height="510" fill="url(#tex)" clip-path="url(#silclip)"/>
<polygon points="1154.0,319.0 1156.0,308.0 1167.0,303.0 1164.0,313.0" fill="#fff" />
<polygon points="187.6,481.8 196.6,517.3 206.0,564.7 214.3,599.0 234.4,639.2 227.3,612.0 220.2,583.6 212.0,548.0 203.7,510.2" fill="#521910" />
<polygon points="187.6,482.0 251.0,463.0 255.0,463.0 262.0,478.0 277.0,499.0 231.0,489.0" fill="#672015" />
<polygon points="251.0,454.8 377.4,397.0 383.0,399.5 383.8,405.8 409.0,440.6 276.3,494.3 262.0,478.0 251.0,463.0" fill="#692116" />
<polygon points="256.0,453.5 376.0,398.7 328.5,440.5" fill="#591a10" />
<polygon points="334.8,439.0 380.6,404.2 386.1,427.1" fill="#702418" />
<polygon points="293.7,480.0 330.0,448.5 334.8,456.4 296.9,481.6" fill="#722519" />
<polygon points="385.3,410.5 401.1,429.5 382.2,431.9" fill="#4f170e" />
<polygon points="267.0,483.0 282.7,480.0 271.6,491.0" fill="#551910" />
<polygon points="277.5,500.0 282.0,507.4 279.6,512.0 284.2,519.4 281.8,524.0 286.3,531.4 283.9,536.0 288.5,543.4 286.1,548.0 290.6,555.4 288.2,560.0 292.7,567.4 290.4,572.0 294.9,579.4 292.5,584.0 300.0,580.5 318.0,569.0 320.8,566.7 340.0,559.5 385.0,542.0 403.0,545.0 416.0,535.5 425.0,535.0 420.1,526.7 422.8,521.6 417.9,513.2 420.6,508.1 415.7,499.8 418.4,494.7 413.5,486.4 416.1,481.3 411.3,473.0 413.9,467.9 409.1,459.5 411.7,454.4 406.8,446.1 409.5,441.0" fill="#521910" />
<polygon points="403.0,545.0 416.0,535.0 423.0,541.0 417.0,551.0" fill="#6a2116" />
<polygon points="383.5,403.6 476.0,378.0 480.0,378.0 508.0,409.0 408.0,438.0" fill="#692116" />
<polygon points="403.0,545.0 414.0,630.0 439.6,671.4 425.0,560.0 422.0,546.0 417.0,551.0" fill="#521910" />
<polygon points="476.0,370.0 637.0,280.0 643.0,285.0 670.0,309.0 508.0,409.0 480.0,378.0" fill="#692116" />
<polygon points="478.0,371.0 600.0,303.0 560.0,345.0 500.0,384.0" fill="#5e1c12" />
<polygon points="533.0,368.0 628.0,305.0 650.0,300.0 560.0,372.0" fill="#722519" />
<polygon points="520.0,392.0 600.0,338.0 667.0,306.0 640.0,330.0" fill="#601d13" />
<polygon points="508.0,409.0 513.0,416.4 509.6,421.0 514.6,428.4 511.2,433.0 516.3,440.4 512.9,445.0 517.9,452.4 514.5,457.0 519.5,464.4 516.1,469.0 521.1,476.4 517.8,481.0 522.8,488.4 519.4,493.0 524.4,500.4 521.0,505.0 530.0,505.0 540.0,480.0 550.0,460.0 568.0,428.0 588.0,404.0 608.0,381.0 626.0,354.0 648.0,330.0 670.0,309.0" fill="#521910" />
<polygon points="512.0,407.0 668.0,309.0 650.0,328.0 560.0,372.0 516.0,398.0" fill="#5b1b11" />
<polygon points="540.0,396.0 626.0,354.0 618.0,366.0 560.0,396.0" fill="#4e170e" />
<polygon points="643.0,285.0 659.0,270.0 680.0,251.0 701.0,236.0 723.0,221.0 746.0,208.0 768.0,198.0 790.0,190.0 812.0,183.6 834.0,179.6 856.0,177.4 876.0,177.4 900.0,180.0 920.0,185.0 940.0,192.0 958.0,201.0 964.0,208.0 960.0,208.0 946.0,202.4 930.0,199.0 910.0,197.0 887.0,197.0 865.0,199.0 843.0,203.0 821.0,209.0 799.0,218.0 777.0,229.0 754.0,243.0 732.0,257.0 710.0,273.0 689.0,292.0 670.0,309.0" fill="#752418" />
<polygon points="958.0,197.0 1073.0,207.0 1073.0,213.0 1114.0,229.0 994.0,218.0 958.0,201.0" fill="#672015" />
<polygon points="962.0,198.0 1070.0,208.0 1040.0,214.0" fill="#5c1b11" />
<polygon points="1000.0,214.0 1073.0,214.0 1110.0,228.0" fill="#702418" />
<polygon points="994.0,218.0 1113.0,230.0 1109.2,238.1 1110.9,243.1 1107.1,251.2 1108.8,256.2 1105.0,264.4 1106.7,269.3 1102.9,277.5 1104.6,282.4 1100.7,290.6 1102.4,295.6 1098.6,303.7 1100.3,308.7 1096.5,316.8 1098.2,321.8 1094.4,329.9 1096.1,334.9 1092.3,343.0 1094.0,348.0 1092.7,349.0 1091.8,335.0 1086.0,326.0 1084.5,315.5 1078.0,310.0 1076.5,299.5 1070.0,294.0 1067.5,284.0 1060.0,279.0 1057.0,269.5 1049.0,265.0 1046.0,256.0 1038.0,252.0 1033.5,244.5 1024.0,242.0 1019.5,234.5 1010.0,232.0 1004.5,222.5" fill="#571a10" />
<polygon points="975.0,237.0 991.6,246.3 1023.0,263.7 1047.0,292.0 1063.0,319.0 1074.0,342.7 1078.0,358.0 1051.0,355.0 1042.0,347.4 1036.0,316.0 1026.0,293.7 1012.0,271.6 996.0,252.6 980.5,240.0" fill="#47140c" />
<polygon points="1051.0,355.0 1078.0,358.0 1090.0,368.0 1081.0,438.0 1044.0,414.0" fill="#5c1b11" />
<line x1="1051.5" y1="364.0" x2="1087.0" y2="375.5" stroke="#4f170e" stroke-width="0.8" />
<line x1="1050.8" y1="370.9" x2="1086.1" y2="382.1" stroke="#4f170e" stroke-width="0.8" />
<line x1="1050.1" y1="377.8" x2="1085.2" y2="388.7" stroke="#4f170e" stroke-width="0.8" />
<line x1="1049.4" y1="384.7" x2="1084.3" y2="395.3" stroke="#4f170e" stroke-width="0.8" />
<line x1="1048.7" y1="391.6" x2="1083.4" y2="401.9" stroke="#4f170e" stroke-width="0.8" />
<line x1="1048.0" y1="398.5" x2="1082.5" y2="408.5" stroke="#4f170e" stroke-width="0.8" />
<line x1="1047.3" y1="405.4" x2="1081.6" y2="415.1" stroke="#4f170e" stroke-width="0.8" />
<line x1="1046.6" y1="412.3" x2="1080.7" y2="421.7" stroke="#4f170e" stroke-width="0.8" />
<polygon points="1073.0,213.0 1128.0,197.0 1131.0,190.4 1188.6,192.0 1188.6,196.7 1172.0,217.0 1114.0,229.0" fill="#692116" />
<polygon points="1142.9,191.6 1184.0,192.7 1179.5,198.5" fill="#571a10" />
<polygon points="1179.5,194.5 1188.6,192.5 1181.8,209.3 1171.5,210.5" fill="#6e2317" />
<polygon points="1172.0,212.0 1173.5,219.6 1169.5,224.3 1171.0,231.9 1167.0,236.6 1168.5,244.2 1164.5,248.9 1166.0,256.5 1162.0,261.1 1163.5,268.8 1159.5,273.4 1161.0,281.0 1157.0,285.7 1158.5,293.3 1154.5,298.0 1156.0,308.0 1166.0,306.0 1180.0,290.0 1194.0,287.0 1206.0,292.0 1210.0,300.0 1214.0,282.0 1219.0,268.0 1223.0,255.0 1224.7,243.6 1227.0,229.0 1228.0,212.0" fill="#521910" />
<line x1="1168.0" y1="232.0" x2="1212.0" y2="261.9" stroke="#6a2116" stroke-width="1.6" stroke-dasharray="2.5 2.5"/>
<line x1="1163.8" y1="245.0" x2="1206.3" y2="273.9" stroke="#6a2116" stroke-width="1.6" stroke-dasharray="2.5 2.5"/>
<line x1="1159.6" y1="258.0" x2="1200.6" y2="285.9" stroke="#6a2116" stroke-width="1.6" stroke-dasharray="2.5 2.5"/>
<line x1="1155.4" y1="271.0" x2="1194.9" y2="297.9" stroke="#6a2116" stroke-width="1.6" stroke-dasharray="2.5 2.5"/>
<line x1="1151.2" y1="284.0" x2="1189.2" y2="309.8" stroke="#6a2116" stroke-width="1.6" stroke-dasharray="2.5 2.5"/>
<line x1="1147.0" y1="297.0" x2="1183.5" y2="321.8" stroke="#6a2116" stroke-width="1.6" stroke-dasharray="2.5 2.5"/>
<polygon points="1166.0,306.0 1180.0,290.0 1194.0,287.0 1206.0,292.0 1210.0,300.0 1208.0,322.0 1202.0,336.0 1164.0,316.0 1164.0,313.0 1167.0,303.0" fill="#47140c" />
<polygon points="1166.0,306.0 1180.0,290.0 1194.0,287.0 1186.0,296.0 1176.0,312.0" fill="#5a1b11" />
<polygon points="1154.0,319.0 1164.0,316.0 1202.0,336.0 1200.0,345.0 1149.0,354.0" fill="#672015" />
<polygon points="1188.6,196.7 1228.1,185.6 1269.5,203.6 1229.0,201.0" fill="#6a2116" />
<polygon points="1148.5,352.0 1145.0,356.0 1147.9,360.0" fill="#4a150d" />
<polygon points="1146.8,362.0 1143.3,366.0 1146.2,370.0" fill="#4a150d" />
<polygon points="1145.1,372.0 1141.6,376.0 1144.5,380.0" fill="#4a150d" />
<polygon points="1143.4,382.0 1139.9,386.0 1142.8,390.0" fill="#4a150d" />
<polygon points="1141.7,392.0 1138.2,396.0 1141.1,400.0" fill="#4a150d" />
<line x1="255.0" y1="463.0" x2="231.0" y2="489.0" stroke="#8c474a" stroke-width="3.6" />
<line x1="231.0" y1="489.0" x2="277.0" y2="500.0" stroke="#8c474a" stroke-width="3.6" />
<line x1="383.8" y1="404.5" x2="508.0" y2="409.0" stroke="#8c474a" stroke-width="3.6" />
<line x1="480.0" y1="378.0" x2="408.0" y2="438.0" stroke="#8c474a" stroke-width="3.6" />
<line x1="1073.0" y1="214.4" x2="1172.0" y2="217.0" stroke="#8c474a" stroke-width="3.6" />
<line x1="1129.0" y1="200.0" x2="1114.0" y2="229.0" stroke="#8c474a" stroke-width="3.6" />
<line x1="1186.4" y1="197.9" x2="1227.6" y2="199.8" stroke="#8c474a" stroke-width="2.6" />
<line x1="1227.6" y1="199.0" x2="1227.6" y2="217.0" stroke="#8c474a" stroke-width="2.4" />
<line x1="1150.0" y1="332.0" x2="1176.0" y2="325.0" stroke="#8a5056" stroke-width="1.6" />
<line x1="1178.0" y1="324.0" x2="1190.0" y2="321.0" stroke="#8a5056" stroke-width="1.2" />
<line x1="659.0" y1="270.0" x2="689.0" y2="292.0" stroke="#45130b" stroke-width="1" />
<line x1="689.0" y1="292.0" x2="690.5" y2="313.0" stroke="#571910" stroke-width="1" />
<line x1="680.0" y1="251.0" x2="710.0" y2="273.0" stroke="#45130b" stroke-width="1" />
<line x1="710.0" y1="273.0" x2="711.5" y2="293.2" stroke="#571910" stroke-width="1" />
<line x1="701.0" y1="236.0" x2="732.0" y2="257.0" stroke="#45130b" stroke-width="1" />
<line x1="732.0" y1="257.0" x2="733.5" y2="276.6" stroke="#571910" stroke-width="1" />
<line x1="723.0" y1="221.0" x2="754.0" y2="243.0" stroke="#45130b" stroke-width="1" />
<line x1="754.0" y1="243.0" x2="755.5" y2="262.7" stroke="#571910" stroke-width="1" />
<line x1="746.0" y1="208.0" x2="777.0" y2="229.0" stroke="#45130b" stroke-width="1" />
<line x1="777.0" y1="229.0" x2="778.5" y2="250.8" stroke="#571910" stroke-width="1" />
<line x1="768.0" y1="198.0" x2="799.0" y2="218.0" stroke="#45130b" stroke-width="1" />
<line x1="799.0" y1="218.0" x2="800.5" y2="239.8" stroke="#571910" stroke-width="1" />
<line x1="790.0" y1="190.0" x2="821.0" y2="209.0" stroke="#45130b" stroke-width="1" />
<line x1="821.0" y1="209.0" x2="822.5" y2="232.3" stroke="#571910" stroke-width="1" />
<line x1="812.0" y1="183.6" x2="843.0" y2="203.0" stroke="#45130b" stroke-width="1" />
<line x1="843.0" y1="203.0" x2="844.5" y2="226.8" stroke="#571910" stroke-width="1" />
<line x1="834.0" y1="179.6" x2="865.0" y2="199.0" stroke="#45130b" stroke-width="1" />
<line x1="865.0" y1="199.0" x2="866.5" y2="223.3" stroke="#571910" stroke-width="1" />
<line x1="856.0" y1="177.4" x2="887.0" y2="197.0" stroke="#45130b" stroke-width="1" />
<line x1="887.0" y1="197.0" x2="888.5" y2="221.7" stroke="#571910" stroke-width="1" />
<polygon points="274.9,509.4 280.1,509.4 278.9,512.5 273.7,512.5" fill="#93575d" />
<polygon points="277.2,520.9 282.4,520.9 281.2,524.0 276.0,524.0" fill="#93575d" />
<polygon points="279.5,532.4 284.7,532.4 283.5,535.5 278.3,535.5" fill="#93575d" />
<polygon points="281.7,543.9 286.9,543.9 285.7,547.0 280.5,547.0" fill="#93575d" />
<polygon points="284.0,555.4 289.2,555.4 288.0,558.5 282.8,558.5" fill="#93575d" />
<polygon points="286.3,566.9 291.5,566.9 290.3,570.0 285.1,570.0" fill="#93575d" />
<polygon points="288.6,578.4 293.8,578.4 292.6,581.5 287.4,581.5" fill="#93575d" />
<polygon points="411.9,443.5 417.1,443.5 415.9,446.6 410.7,446.6" fill="#93575d" />
<polygon points="414.1,456.9 419.3,456.9 418.1,460.0 412.9,460.0" fill="#93575d" />
<polygon points="416.3,470.3 421.5,470.3 420.3,473.4 415.1,473.4" fill="#93575d" />
<polygon points="418.5,483.8 423.7,483.8 422.5,486.9 417.3,486.9" fill="#93575d" />
<polygon points="420.7,497.2 425.9,497.2 424.7,500.3 419.5,500.3" fill="#93575d" />
<polygon points="422.9,510.6 428.1,510.6 426.9,513.7 421.7,513.7" fill="#93575d" />
<polygon points="425.1,524.1 430.3,524.1 429.1,527.1 423.9,527.1" fill="#93575d" />
<polygon points="505.2,411.1 510.4,411.1 509.2,414.2 504.0,414.2" fill="#93575d" />
<polygon points="506.8,423.1 512.0,423.1 510.8,426.2 505.6,426.2" fill="#93575d" />
<polygon points="508.4,435.1 513.6,435.1 512.4,438.2 507.2,438.2" fill="#93575d" />
<polygon points="510.1,447.1 515.3,447.1 514.1,450.2 508.9,450.2" fill="#93575d" />
<polygon points="511.7,459.1 516.9,459.1 515.7,462.2 510.5,462.2" fill="#93575d" />
<polygon points="513.3,471.1 518.5,471.1 517.3,474.2 512.1,474.2" fill="#93575d" />
<polygon points="514.9,483.1 520.1,483.1 518.9,486.2 513.7,486.2" fill="#93575d" />
<polygon points="516.6,495.1 521.8,495.1 520.6,498.2 515.4,498.2" fill="#93575d" />
<polygon points="1163.7,226.7 1169.2,226.7 1168.2,229.3 1162.7,229.3" fill="#93575d" />
<polygon points="1160.0,239.7 1166.6,239.7 1165.6,242.3 1159.0,242.3" fill="#93575d" />
<polygon points="1156.6,250.7 1164.3,250.7 1163.3,253.3 1155.6,253.3" fill="#93575d" />
<polygon points="1153.3,261.7 1162.1,261.7 1161.1,264.3 1152.3,264.3" fill="#93575d" />
<polygon points="1149.9,272.7 1159.8,272.7 1158.8,275.3 1148.9,275.3" fill="#93575d" />
<polygon points="1146.4,284.7 1157.4,284.7 1156.4,287.3 1145.4,287.3" fill="#93575d" />
<polygon points="1143.2,294.7 1155.3,294.7 1154.3,297.3 1142.2,297.3" fill="#93575d" />
<polygon points="1112.6,232.9 1114.6,232.9 1113.4,234.9 1111.4,234.9" fill="#8a4a50" />
<polygon points="1110.5,246.0 1112.5,246.0 1111.3,248.0 1109.3,248.0" fill="#8a4a50" />
<polygon points="1108.3,259.2 1110.3,259.2 1109.1,261.2 1107.1,261.2" fill="#8a4a50" />
<polygon points="1106.2,272.3 1108.2,272.3 1107.0,274.3 1105.0,274.3" fill="#8a4a50" />
<polygon points="1104.1,285.4 1106.1,285.4 1104.9,287.4 1102.9,287.4" fill="#8a4a50" />
<polygon points="1102.0,298.5 1104.0,298.5 1102.8,300.5 1100.8,300.5" fill="#8a4a50" />
<polygon points="1099.9,311.6 1101.9,311.6 1100.7,313.6 1098.7,313.6" fill="#8a4a50" />
<polygon points="1097.8,324.7 1099.8,324.7 1098.6,326.7 1096.6,326.7" fill="#8a4a50" />
<polygon points="1095.7,337.8 1097.7,337.8 1096.5,339.8 1094.5,339.8" fill="#8a4a50" />
<polygon points="1009.0,229.0 1013.0,229.0 1012.4,231.4 1008.4,231.4" fill="#93575d" />
<polygon points="1023.0,239.0 1027.0,239.0 1026.4,241.4 1022.4,241.4" fill="#93575d" />
<polygon points="1037.0,249.0 1041.0,249.0 1040.4,251.4 1036.4,251.4" fill="#93575d" />
<polygon points="1048.0,262.0 1052.0,262.0 1051.4,264.4 1047.4,264.4" fill="#93575d" />
<polygon points="1059.0,276.0 1063.0,276.0 1062.4,278.4 1058.4,278.4" fill="#93575d" />
<polygon points="1069.0,291.0 1073.0,291.0 1072.4,293.4 1068.4,293.4" fill="#93575d" />
<polygon points="1077.0,307.0 1081.0,307.0 1080.4,309.4 1076.4,309.4" fill="#93575d" />
<polygon points="1085.0,323.0 1089.0,323.0 1088.4,325.4 1084.4,325.4" fill="#93575d" />
<line x1="640.8" y1="286.8" x2="648.2" y2="295.2" stroke="#86565c" stroke-width="2" />
<line x1="623.5" y1="303.5" x2="627.5" y2="307.5" stroke="#86565c" stroke-width="1.4" />
<polygon points="667.5,309.2 670.5,309.2 670.5,312.2 667.5,312.2" fill="#93575d" />
<polygon points="624.1,352.2 627.1,352.2 627.1,355.2 624.1,355.2" fill="#93575d" />
<polygon points="646.5,328.5 649.5,328.5 649.5,331.5 646.5,331.5" fill="#93575d" />
<polygon points="606.5,379.5 609.5,379.5 609.5,382.5 606.5,382.5" fill="#93575d" /></svg>
<!-- right panel -->
<div class="abs" style="left:1349.5px;top:116px;width:46.5px;height:625px;border:1px solid #a5b3c7;border-radius:2px;background:linear-gradient(to bottom,#f0f0f0 0%,#f6f6f6 50%,#ffffff 100%)"></div>
<svg class="abs" style="left:1360px;top:128px" width="23" height="23" viewBox="0 0 23 23"><path d="M6 1.5L11 12H1Z" fill="#f04818"/><path d="M6 1.5L8 12H1Z" fill="#ffb060"/><path d="M6 1.5L11 12H8.5Z" fill="#e02808"/><path d="M5 9H8V15L11 15.5L7.5 20L3 14.5L5 15Z" fill="#28a828" stroke="#187018" stroke-width="0.4"/><path d="M11 12L17 10L22 12V19L16 21.5L11 19Z" fill="#2868d8"/><path d="M11 12L17 10L22 12L16 14Z" fill="#68a8f8"/><path d="M16 14L22 12V19L16 21.5Z" fill="#1848a8"/></svg>
<svg class="abs" style="left:1362px;top:157px" width="19" height="23" viewBox="0 0 19 23"><rect x="1" y="1" width="17" height="21" rx="1.5" fill="#2f86e8"/><rect x="3" y="3" width="13" height="17" fill="#f2f2f2"/><path d="M5.5 6L7.5 8.5L12.5 3.5" stroke="#d81818" stroke-width="1.7" fill="none"/><rect x="5.5" y="10" width="5" height="4" fill="none" stroke="#909090" stroke-width="0.7"/><path d="M5.5 11.5L7.5 14L12 9.5" stroke="#d81818" stroke-width="1.6" fill="none"/><rect x="5.5" y="15.5" width="5" height="3.4" fill="none" stroke="#a0a0a0" stroke-width="0.7"/></svg>
<svg class="abs" style="left:1360px;top:187px" width="24" height="24" viewBox="0 0 24 24"><g stroke="#a8a8a8" stroke-width="3.4" stroke-linecap="round"><path d="M12 2V22"/><path d="M2 17L21 7"/><path d="M4 7L20 17"/></g><g stroke="#e0e0e0" stroke-width="1.2" stroke-linecap="round"><path d="M11.4 2V22"/><path d="M2 16.3L21 6.3"/></g><path d="M19.5 18L22 16.2L21 19.5Z" fill="#38b038"/><circle cx="12.3" cy="11.6" r="3.3" fill="#1888f0"/><circle cx="11.6" cy="10.8" r="1.2" fill="#90d0ff"/></svg>
<svg class="abs" style="left:1360px;top:217px" width="23" height="22" viewBox="0 0 23 22"><path d="M1 14L11.5 9L22 14L11.5 20Z" fill="#b8b8b8"/><path d="M1 14V15.5L11.5 21.5L22 15.5V14L11.5 20Z" fill="#8c8c8c"/><path d="M1 10.5L11.5 5.5L22 10.5L11.5 16.5Z" fill="#58b060"/><path d="M1 10.5V12L11.5 18L22 12V10.5L11.5 16.5Z" fill="#388848"/><path d="M1 7L11.5 1.5L22 7L11.5 13Z" fill="#3c98ec"/><path d="M1 7V8.6L11.5 14.6L22 8.6V7L11.5 13Z" fill="#1c68c0"/></svg>
<div class="abs" style="left:1351.5px;top:256.5px;width:43px;height:28.5px;border-radius:3px;background:linear-gradient(to bottom,#ffffff 0%,#fbfbfb 45%,#dcdcdc 100%);box-shadow:0 0 0 0.5px #d0d0d0"></div>
<div class="abs" style="left:1356.8px;top:259.3px;font-size:8.60px;line-height:10px;letter-spacing:0.211px;color:#202020;white-space:nowrap;">Redraw</div>
<div class="abs" style="left:1357.4px;top:271.5px;font-size:8.60px;line-height:10px;letter-spacing:0.257px;color:#202020;white-space:nowrap;">3D Plot</div>
<!-- status -->
<div class="abs" style="left:1px;top:742px;width:1397px;height:2px;background:#fff"></div>
<div id="status" class="abs"></div>
<div class="abs" style="left:1075.2px;top:747px;width:1px;height:13px;background:#d7d7d7"></div>
<div class="abs" style="left:1132.9px;top:747px;width:1px;height:13px;background:#d7d7d7"></div>
<div class="abs" style="left:1180.1px;top:747px;width:1px;height:13px;background:#d7d7d7"></div>
<div class="abs" style="left:1241.8px;top:747px;width:1px;height:13px;background:#d7d7d7"></div>
<div class="abs" style="left:1296.6px;top:747px;width:1px;height:13px;background:#d7d7d7"></div>
<div class="abs" style="left:1078.6px;top:748.4px;font-size:8.00px;line-height:10px;letter-spacing:0.081px;color:#000;white-space:nowrap;">Length: m</div>
<div class="abs" style="left:1136.6px;top:748.4px;font-size:8.00px;line-height:10px;letter-spacing:-0.074px;color:#000;white-space:nowrap;">Force: kN</div>
<div class="abs" style="left:1184.3px;top:748.4px;font-size:8.00px;line-height:10px;letter-spacing:-0.016px;color:#000;white-space:nowrap;">Mass: tonne</div>
<div class="abs" style="left:1245.7px;top:748.4px;font-size:8.00px;line-height:10px;letter-spacing:-0.336px;color:#000;white-space:nowrap;">Stress: kPa</div>
<div class="abs" style="left:1300.0px;top:748.4px;font-size:8.00px;line-height:10px;letter-spacing:0.117px;color:#000;white-space:nowrap;">Acceleration: m/sec2</div>
</body>
</html>
